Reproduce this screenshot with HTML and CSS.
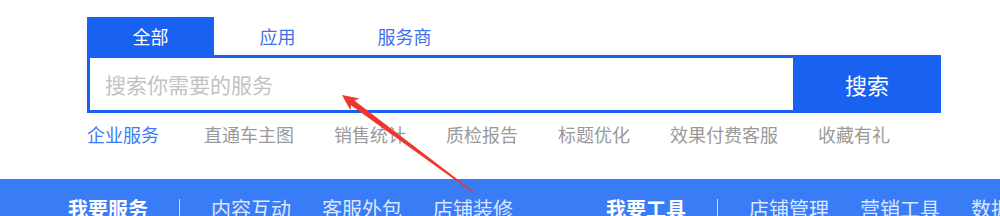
FILE: index.html
```html
<!DOCTYPE html>
<html lang="zh-CN">
<head>
<meta charset="utf-8">
<title>搜索服务</title>
<link rel="stylesheet" href="styles.css">
</head>
<body>
<div class="top">
  <div class="tabs">
    <div class="tab active">全部</div>
    <div class="tab">应用</div>
    <div class="tab">服务商</div>
  </div>
  <div class="search">
    <div class="search-input">搜索你需要的服务</div>
    <div class="search-btn">搜索</div>
  </div>
  <div class="hot">
    <span class="hot-link current">企业服务</span>
    <span class="hot-link">直通车主图</span>
    <span class="hot-link">销售统计</span>
    <span class="hot-link">质检报告</span>
    <span class="hot-link">标题优化</span>
    <span class="hot-link">效果付费客服</span>
    <span class="hot-link">收藏有礼</span>
  </div>
</div>
<div class="bar">
  <div class="group">
    <span class="group-title">我要服务</span>
    <span class="sep"></span>
    <span class="item">内容互动</span>
    <span class="item">客服外包</span>
    <span class="item">店铺装修</span>
  </div>
  <div class="group">
    <span class="group-title">我要工具</span>
    <span class="sep"></span>
    <span class="item">店铺管理</span>
    <span class="item">营销工具</span>
    <span class="item">数据分析</span>
  </div>
</div>
<svg class="arrow" width="1000" height="216" viewBox="0 0 1000 216">
  <polygon points="342,95 359.5,98.5 354.3,100.6 473.4,191.5 472.6,192.4 350.9,105.2 350.5,110.5" fill="#eb372d"/>
</svg>
</body>
</html>
```
FILE: styles.css
```css
html, body {
  margin: 0;
  padding: 0;
  background: #fff;
  overflow: hidden;
}
body {
  width: 1000px;
  height: 216px;
  position: relative;
  font-family: "Noto Sans CJK SC", "Noto Sans", sans-serif;
}
.top {
  box-sizing: border-box;
  height: 179px;
  padding: 17px 0 0 87px;
}
.tabs {
  display: flex;
  height: 38px;
}
.tab {
  width: 127px;
  text-align: center;
  line-height: 38px;
  font-size: 18px;
  color: #3f72ea;
}
.tab.active {
  background: #1961f0;
  color: #fff;
}
.search {
  display: flex;
  width: 854px;
  height: 58px;
}
.search-input {
  box-sizing: border-box;
  width: 706px;
  border: 3px solid #1961f0;
  border-right: 0;
  padding-left: 15px;
  line-height: 52px;
  font-size: 21px;
  color: #c2c2c2;
}
.search-btn {
  flex: 1;
  background: #1961f0;
  color: #fff;
  font-size: 22px;
  line-height: 58px;
  text-align: center;
}
.hot {
  display: flex;
  gap: 40px;
  height: 42px;
  line-height: 42px;
  font-size: 18px;
  color: #9a9a9a;
}
.hot-link.current {
  color: #3b7cf5;
  margin-right: 5px;
}
.bar {
  display: flex;
  height: 37px;
  background: #3a7bf6;
  padding-left: 68px;
  overflow: hidden;
}
.group {
  flex: 0 0 538px;
  display: flex;
  align-items: center;
  height: 60px;
  line-height: 60px;
  font-size: 20px;
  color: #dbe7ff;
}
.group-title {
  font-weight: bold;
  color: #fff;
}
.sep {
  width: 1px;
  height: 20px;
  margin: 0 31px;
  background: #c9dafc;
}
.item {
  margin-right: 31px;
}
.arrow {
  position: absolute;
  top: 0;
  left: 0;
  pointer-events: none;
}
```
